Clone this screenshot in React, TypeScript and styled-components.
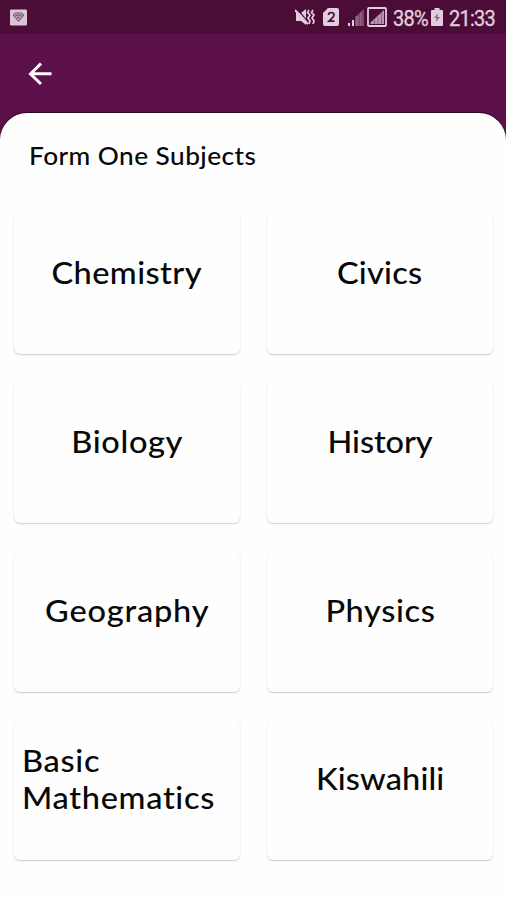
import React from 'react';
import styled, { createGlobalStyle } from 'styled-components';

const GlobalStyle = createGlobalStyle`
  * { box-sizing: border-box; }
  body { margin: 0; background: #5c114a; }
`;

const Screen = styled.main`
  display: flex;
  flex-direction: column;
  width: 506px;
  height: 900px;
  overflow: hidden;
  background: #5c114a;
  font-family: Lato, 'Open Sans', sans-serif;
  color: #080808;
`;

const StatusBar = styled.header`
  display: flex;
  justify-content: space-between;
  align-items: center;
  flex: none;
  height: 34px;
  padding: 0 11px 0 10px;
  background: #4b0c38;
  color: #e2cddd;
`;

const StatusIcons = styled.div`
  display: flex;
  align-items: center;
  height: 34px;
`;

const StatusText = styled.span<{ $width: number }>`
  width: ${(p) => p.$width}px;
  font: 400 20px/34px Roboto, sans-serif;
  letter-spacing: -0.75px;
  white-space: nowrap;
  padding-top: 1px;
  transform: scaleY(1.08);
  -webkit-text-stroke: 0.3px currentColor;
`;

const Glyph = styled.svg<{ $right?: number }>`
  display: block;
  flex: none;
  margin-right: ${(p) => p.$right ?? 0}px;
`;

const AppBar = styled.nav`
  display: flex;
  align-items: center;
  flex: none;
  height: 79px;
  padding-left: 24px;
`;

const BackButton = styled.button`
  display: flex;
  padding: 0;
  border: 0;
  background: none;
  color: #fff;
`;

const Sheet = styled.section`
  flex: 1;
  padding: 25px 13px 0 14px;
  border-radius: 27px 27px 0 0;
  background: #fefefe;
  box-shadow: 0 -1px 1px #2d0520;
`;

const Title = styled.h1`
  margin: 0 0 40px 15px;
  font-size: 25px;
  line-height: 35px;
  font-weight: 500;
  letter-spacing: 0.42px;
  transform: scaleX(1.05);
  transform-origin: left;
`;

const Grid = styled.div`
  display: grid;
  grid-template-columns: 226px 226px;
  grid-auto-rows: 141px;
  gap: 27.8px 27px;
`;

const Card = styled.article`
  display: flex;
  align-items: center;
  justify-content: center;
  padding: 0 8px 22px;
  border-radius: 6px;
  background: #fefefe;
  box-shadow: 0 1px 1.5px rgba(0, 0, 0, 0.18), 0 0 1px rgba(0, 0, 0, 0.08);
`;

const Subject = styled.span<{ $tracking: number; $wraps?: boolean }>`
  font-size: 31px;
  line-height: 37px;
  font-weight: 500;
  letter-spacing: ${(p) => p.$tracking}px;
  transform: scaleX(1.05);
  transform-origin: ${(p) => (p.$wraps ? 'left' : 'center')};
`;

const subjects = [
  { name: 'Chemistry', tracking: 0.41 },
  { name: 'Civics', tracking: 0.2 },
  { name: 'Biology', tracking: 0.6 },
  { name: 'History', tracking: -0.1 },
  { name: 'Geography', tracking: 0.76 },
  { name: 'Physics', tracking: 0.6 },
  { name: 'Basic Mathematics', tracking: 0.65, wraps: true },
  { name: 'Kiswahili', tracking: 0.1 },
];

const NoticeIcon = () => (
  <Glyph width="17" height="17" viewBox="0 0 17 17">
    <rect width="17" height="16" y=".5" rx="1" fill="#dac5d5" />
    <path d="M3 6l2.500-2h6L14 6l-5.500 6.500z" fill="#b698af" stroke="#79536f" />
    <path d="M5 7q3.500-2 7 0M7 9q1.500-1 3 0" fill="none" stroke="#79536f" />
  </Glyph>
);

const MuteIcon = () => (
  <Glyph width="20" height="18" viewBox="0 0 20 18" $right={8}>
    <path d="M1 5h5l5-4v16l-5-4H1z" fill="currentColor" />
    <path d="M2 1l12 14" stroke="#4b0c38" strokeWidth="1.200" />
    <path d="M0 2l13 14" stroke="currentColor" strokeWidth="2" />
    <path d="M14 2l-1.500 2.500L15 7l-2 3 2 3-1 3M18 2l-1.500 2.500L19 7l-2 3 2 3-1 3" fill="none" stroke="currentColor" strokeWidth="1.700" />
  </Glyph>
);

const SimIcon = () => (
  <Glyph width="16" height="18" viewBox="0 0 16 18" $right={8}>
    <path d="M5 0h9q2 0 2 2v14q0 2-2 2H2q-2 0-2-2V5z" fill="currentColor" />
    <path d="M5.500 7q0-2.500 2.700-2.500T11 7q0 1.500-5 6.200h5.500" fill="none" stroke="#4b0c38" strokeWidth="1.700" />
  </Glyph>
);

const SignalIcon = () => (
  <Glyph width="17" height="18" viewBox="0 0 17 18" $right={3}>
    <path d="M1 15h2v3H1zM5 12h2v6H5z" fill="currentColor" />
    <path d="M8 9l9-8v17H8z" fill="#7a4a6d" />
    <path d="M9 8h2.500v10H9zM13 4.500h1.500V18H13z" fill="#906383" />
  </Glyph>
);

const BoxedSignalIcon = () => (
  <Glyph width="20" height="20" viewBox="0 0 20 20" $right={6}>
    <rect x="1" y="1" width="18" height="18" rx="1" fill="none" stroke="currentColor" strokeWidth="1.800" />
    <path d="M3.500 17v-1.500L17 3v14z" fill="#b798af" />
    <path d="M7.500 13v4M11 10v7M14.500 6v11" stroke="#8b6080" />
  </Glyph>
);

const BatteryIcon = () => (
  <Glyph width="12" height="18" viewBox="0 0 12 18" $right={6}>
    <path d="M3.500 0h5v2H11q1 0 1 1v14q0 1-1 1H1q-1 0-1-1V3q0-1 1-1h2.500z" fill="currentColor" />
    <path d="M7 5l-4 5h2.500L5 14l4-5H6.500z" fill="#8d6a83" />
  </Glyph>
);

const BackIcon = () => (
  <Glyph width="32" height="32" viewBox="0 0 32 32">
    <path d="M17 5.500L6.500 16 17 26M6.500 15.700h21" fill="none" stroke="currentColor" strokeWidth="3" />
  </Glyph>
);

export default function App() {
  return (
    <Screen>
      <GlobalStyle />
      <StatusBar>
        <NoticeIcon />
        <StatusIcons>
          <MuteIcon />
          <SimIcon />
          <SignalIcon />
          <BoxedSignalIcon />
          <StatusText $width={38}>38%</StatusText>
          <BatteryIcon />
          <StatusText $width={46}>21:33</StatusText>
        </StatusIcons>
      </StatusBar>
      <AppBar>
        <BackButton aria-label="Back">
          <BackIcon />
        </BackButton>
      </AppBar>
      <Sheet>
        <Title>Form One Subjects</Title>
        <Grid>
          {subjects.map((s) => (
            <Card key={s.name}>
              <Subject $tracking={s.tracking} $wraps={s.wraps}>
                {s.name}
              </Subject>
            </Card>
          ))}
        </Grid>
      </Sheet>
    </Screen>
  );
}
